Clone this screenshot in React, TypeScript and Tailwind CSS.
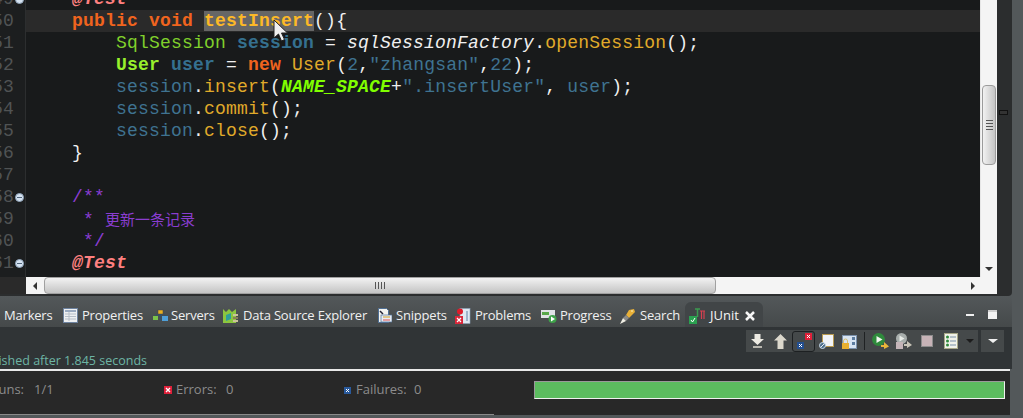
import React from 'react';

const MONO = 'font-["Liberation_Mono",monospace] text-[18px] leading-[22px] tracking-[0.2px] whitespace-pre';
const LABEL = "text-[13px] text-[#8c8c8c] font-['Open_Sans',sans-serif] whitespace-nowrap shrink-0";

const Kw = ({ children }: { children: React.ReactNode }) => <span className="font-bold text-[#f0641e]">{children}</span>;
const Var = ({ children }: { children: React.ReactNode }) => <span className="text-[#3f7391]">{children}</span>;
const VarB = ({ children }: { children: React.ReactNode }) => <span className="font-bold text-[#35708f]">{children}</span>;
const Fn = ({ children }: { children: React.ReactNode }) => <span className="text-[#e0aa2a]">{children}</span>;
const Cm = ({ children }: { children: React.ReactNode }) => <span className="text-[#8a3dd0]">{children}</span>;
const Ann = () => <span className="font-bold italic text-[#ff8080]">@Test</span>;

const Line = ({ active, children }: { active?: boolean; children?: React.ReactNode }) => (
  <div className={`h-[22px] ${MONO} text-[#f0f0f0] ${active ? 'bg-[#2a2a2a] ml-[2px] pl-[26px]' : 'pl-[28px]'}`}>{children}</div>
);

const FoldIcon = () => (
  <div className="w-[9px] h-[9px] rounded-full bg-[#d5e2f0] border border-[#8fa3b8] flex items-center justify-center">
    <div className="w-[5px] h-px bg-[#50647a]" />
  </div>
);

const Num = ({ n, fold }: { n: string; fold?: boolean }) => (
  <div className="h-[22px] flex items-center justify-end">
    <span className={`${MONO} text-[#505354] shrink-0`}>{n}</span>
    <div className="w-[11px] shrink-0 flex justify-end pr-px">{fold && <FoldIcon />}</div>
  </div>
);

const Tab = ({ className, icon, label }: { className: string; icon: React.ReactNode; label: string }) => (
  <div className={`flex items-center shrink-0 h-[25px] pt-[2px] ${className}`}>
    {icon}
    <span className="text-[13px] text-[#f0f0f0] whitespace-nowrap font-['Open_Sans',sans-serif] tracking-[-0.2px]">{label}</span>
  </div>
);

const PropsIcon = () => (
  <svg width="15" height="15" viewBox="0 0 15 15" className="mr-[4px]">
    <rect x="0.5" y="0.5" width="14" height="14" fill="#eef0f2" stroke="#6e83a0" />
    <rect x="2" y="2" width="11" height="2" fill="#9aaac0" />
    <path d="M2 6h11M2 8.500h11M2 11h11M6 4v9" stroke="#b6bec8" />
  </svg>
);
const ServersIcon = () => (
  <svg width="15" height="14" viewBox="0 0 15 14" className="mr-[3px]">
    <rect x="5" y="1" width="5" height="4" fill="#e8b020" stroke="#444" strokeWidth="0.5" />
    <rect x="0" y="7" width="5" height="4" fill="#7cc24a" />
    <rect x="9" y="7" width="6" height="5" fill="#4f9fd8" />
    <path d="M3 7V6h9v1M7.500 5v7" stroke="#30506a" fill="none" />
  </svg>
);
const DataIcon = () => (
  <svg width="16" height="16" viewBox="0 0 16 16" className="mr-[4px]">
    <path d="M0 1l3 3 3-3 3 3 4-3v14H0z" fill="#8cc63f" />
    <path d="M3 7l5-2v6l-5 2z" fill="#2fa09a" />
    <rect x="10" y="6" width="5" height="2" fill="#c9c29a" />
    <rect x="10" y="9" width="5" height="2" fill="#8a7f58" />
    <rect x="10" y="12" width="5" height="2" fill="#c9c29a" />
  </svg>
);
const SnippetsIcon = () => (
  <svg width="14" height="15" viewBox="0 0 14 15" className="mr-[4px]">
    <path d="M0.500 0.500h8l2 2v12h-10z" fill="#f4f4f0" stroke="#4f6f95" />
    <path d="M2 3l3 3" stroke="#223" strokeWidth="1.500" />
    <rect x="3" y="7" width="11" height="7" fill="#e6ecf4" stroke="#4f6f95" strokeWidth="0.7" />
    <path d="M5 9h7" stroke="#d8a020" /><path d="M5 12h7" stroke="#e05050" />
  </svg>
);
const ProblemsIcon = () => (
  <svg width="16" height="16" viewBox="0 0 16 16" className="mr-[4px]">
    <rect x="5" y="0.500" width="10" height="15" fill="#dfe8f2" stroke="#8aa0b8" strokeWidth="0.6" />
    <rect x="11" y="3" width="2" height="10" fill="#9fb4cc" />
    <circle cx="5" cy="3.500" r="3" fill="#e01b2a" />
    <rect x="0" y="8" width="8" height="8" fill="#d9273a" />
    <path d="M2 10l4 4M6 10l-4 4" stroke="#fff" strokeWidth="1.200" />
  </svg>
);
const ProgressIcon = () => (
  <svg width="16" height="14" viewBox="0 0 16 14" className="mr-[3px]">
    <rect x="0" y="1" width="14" height="8" fill="#dfe3e6" />
    <rect x="1" y="3" width="7" height="3" fill="#58a84a" />
    <circle cx="11.500" cy="10" r="4" fill="#3ea24a" />
    <path d="M10 7.500l4 2.500-4 2.500z" fill="#fff" />
  </svg>
);
const SearchIcon = () => (
  <svg width="16" height="16" viewBox="0 0 16 16" className="mr-[4px]">
    <path d="M9 2l5-1 1 3-6 6-3-3z" fill="#e8b038" />
    <path d="M6 7l3 3-3 3-3-3z" fill="#8a8a88" />
    <path d="M3 10l3 3-6 3z" fill="#f0eee4" />
    <path d="M11 3l2 0" stroke="#fff3c0" />
  </svg>
);
const JUnitIcon = () => (
  <svg width="16" height="16" viewBox="0 0 16 16" className="mr-[5px]">
    <path d="M6 1h5M8.500 1v8" stroke="#3c9a50" strokeWidth="1.500" />
    <path d="M11 3h5M12.500 3v8M15 3v8" stroke="#d84050" strokeWidth="1.200" />
    <rect x="0" y="8" width="8" height="8" fill="#2aa050" />
    <path d="M2 12l1.500 2L6 10" stroke="#fff" fill="none" />
  </svg>
);

const ErrIcon = () => (
  <svg width="8" height="8" viewBox="0 0 8 8" className="mr-[4px] shrink-0">
    <rect width="8" height="8" fill="#e0203a" />
    <path d="M2 2l4 4M6 2L2 6" stroke="#fff" strokeWidth="1.300" />
  </svg>
);
const FailIcon = () => (
  <svg width="7" height="7" viewBox="0 0 7 7" className="mr-[5px] shrink-0">
    <rect width="7" height="7" fill="#2a5a9c" />
    <path d="M2 2l3 3M5 2L2 5" stroke="#fff" />
  </svg>
);

const Toolbar = () => (
  <div className="flex items-center h-[22px] bg-[#45494a] w-[232px] pl-[5px] shrink-0">
    <svg width="13" height="15" viewBox="0 0 13 15" className="mr-[10px]">
      <path d="M3.500 0h6v5H13L6.500 11 0 5h3.500z" fill="#eceae2" /><rect x="2" y="12" width="9" height="2" fill="#b8b6ae" />
    </svg>
    <svg width="13" height="15" viewBox="0 0 13 15" className="mr-[5px]">
      <path d="M6.500 0L13 6.500H9.500V15h-6V6.500H0z" fill="#dcd8cc" />
    </svg>
    <div className="relative w-[23px] h-[21px] rounded-[3px] border border-[#1d2022] shrink-0">
      <svg width="21" height="19" viewBox="0 0 21 19" className="absolute left-0 top-0">
        <rect x="12" y="1" width="7" height="7" fill="#e0203a" /><path d="M14 3l3 3M17 3l-3 3" stroke="#fff" />
        <rect x="4" y="10" width="7" height="7" fill="#234f90" /><path d="M6 12l3 3M9 12l-3 3" stroke="#fff" />
      </svg>
    </div>
    <svg width="15" height="15" viewBox="0 0 15 15" className="ml-[4px] mr-[8px]">
      <rect x="3.500" y="0.500" width="11" height="12" fill="#f2f4f8" stroke="#b89a50" />
      <circle cx="3.500" cy="11.500" r="3" fill="#50708c" stroke="#c8d8e8" /><path d="M1.500 13.500l4-4" stroke="#e8eef4" />
    </svg>
    <svg width="15" height="15" viewBox="0 0 15 15" className="mr-[7px]">
      <rect x="0.500" y="1.500" width="14" height="13" fill="#d8e4f2" stroke="#7c92ac" />
      <rect x="10" y="3" width="3" height="3" fill="#5d7da0" /><rect x="10" y="8" width="3" height="3" fill="#5d7da0" />
      <rect x="0" y="9" width="7" height="6" fill="#e8b030" /><path d="M1.500 9V7a2 2 0 0 1 4 0v2" stroke="#d8c070" fill="none" />
    </svg>
    <div className="w-px h-[18px] bg-[#1f2223] mr-[7px]" />
    <svg width="17" height="16" viewBox="0 0 17 16" className="mr-[6px]">
      <circle cx="6.500" cy="6.500" r="6.500" fill="#2f8a3c" /><path d="M4.500 3l6 3.500-6 3.500z" fill="#f2f6f0" />
      <path d="M9 12h3V9l5 4.500L12 16v-2H9z" fill="#eab53a" />
    </svg>
    <svg width="17" height="16" viewBox="0 0 17 16" className="mr-[9px]">
      <circle cx="6.500" cy="5.500" r="5.500" fill="#a8aeac" /><path d="M4.500 2.500l5 3-5 3z" fill="#e8ece8" />
      <rect x="1" y="9" width="7" height="7" fill="#c4b4b8" />
      <path d="M9 11h3V8l5 4-5 3v-2H9z" fill="#c8c4b8" />
    </svg>
    <div className="w-[12px] h-[12px] bg-[#c7b3b7] border border-[#8c8c8c] mr-[11px] shrink-0" />
    <svg width="14" height="16" viewBox="0 0 14 16" className="mr-[8px]">
      <rect x="0.500" y="0.500" width="13" height="15" fill="#f0f2ea" stroke="#a8a888" />
      <circle cx="3.500" cy="4" r="1.500" fill="#2f8a3c" /><circle cx="3.500" cy="8" r="1.500" fill="#2f8a3c" /><circle cx="3.500" cy="12" r="1.500" fill="#2f8a3c" />
      <path d="M6 4h6M6 8h6M6 12h6" stroke="#7890a8" />
    </svg>
    <div className="w-0 h-0 border-x-[4px] border-x-transparent border-t-[4px] border-t-[#1c1c1c]" />
  </div>
);

export default function App() {
  return (
    <div className="w-[1023px] h-[418px] overflow-hidden flex flex-col bg-[#53585a]">
      {/* editor + right strip */}
      <div className="flex w-[1012px] h-[296px] shrink-0 bg-[#2b2d2e] rounded-br-[4px]">
        <div className="w-[997px] h-[294px] flex flex-col shrink-0">
          <div className="flex h-[277px] shrink-0">
            {/* gutter */}
            <div className="w-[26px] shrink-0 bg-[#1c1e1f] border-r border-[#2c2e2f] overflow-hidden">
              <div className="-mt-[12px]">
                <Num n="49" fold />
                <Num n="50" />
                <Num n="51" />
                <Num n="52" />
                <Num n="53" />
                <Num n="54" />
                <Num n="55" />
                <Num n="56" />
                <Num n="57" />
                <Num n="58" fold />
                <Num n="59" />
                <Num n="60" />
                <Num n="61" fold />
              </div>
            </div>
            {/* code */}
            <div className="flex-1 min-w-0 bg-[#181a1b] overflow-hidden relative">
              <div className="-mt-[12px] -ml-[26px]">
                <Line>{'    '}<Ann /></Line>
                <Line active>{'    '}<Kw>public</Kw> <Kw>void</Kw> <span className="font-bold text-[#fdb927] bg-[#666666]">testInsert</span>(){'{'}</Line>
                <Line>{'        '}<span className="text-[#80d02c]">SqlSession</span> <VarB>session</VarB> = <i>sqlSessionFactory</i>.<Fn>openSession</Fn>();</Line>
                <Line>{'        '}<span className="font-bold text-[#98f02c]">User</span> <VarB>user</VarB> = <Kw>new</Kw> <Fn>User</Fn>(<Var>2</Var>,<Var>"zhangsan"</Var>,<Var>22</Var>);</Line>
                <Line>{'        '}<Var>session</Var>.<Fn>insert</Fn>(<span className="font-bold italic text-[#80ff00]">NAME_SPACE</span>+<Var>".insertUser"</Var>, <Var>user</Var>);</Line>
                <Line>{'        '}<Var>session</Var>.<Fn>commit</Fn>();</Line>
                <Line>{'        '}<Var>session</Var>.<Fn>close</Fn>();</Line>
                <Line>{'    }'}</Line>
                <Line />
                <Line>{'    '}<Cm>/**</Cm></Line>
                <Line>{'     '}<Cm>*{' '}<span className="font-['Noto_Sans_CJK_SC',sans-serif] text-[15px] tracking-normal">更新一条记录</span></Cm></Line>
                <Line>{'     '}<Cm>*/</Cm></Line>
                <Line>{'    '}<Ann /></Line>
              </div>
              {/* mouse cursor */}
              <svg width="18" height="25" viewBox="0 0 18 25" className="absolute left-[247px] top-[19px]">
                <path d="M1 1v18l4.500-4 3 7 3-1.500-3-6.500h6z" fill="#f0f0f0" stroke="#222" />
              </svg>
            </div>
            {/* vertical scrollbar */}
            <div className="w-[17px] shrink-0 bg-[#f4f4f4] border-l border-[#e6e6e6] flex flex-col">
              <div className="h-[85px]" />
              <div className="h-[80px] mx-px rounded-sm border border-[#9c9c9c] bg-gradient-to-r from-[#f2f2f2] to-[#c4c4c4] flex flex-col items-center justify-center gap-[2px]">
                <div className="w-[7px] h-px bg-[#555]" />
                <div className="w-[7px] h-px bg-[#555]" />
                <div className="w-[7px] h-px bg-[#555]" />
                <div className="w-[7px] h-px bg-[#555]" />
              </div>
              <div className="flex-1 flex items-end justify-center pb-[6px]">
                <div className="w-0 h-0 border-x-[4px] border-x-transparent border-t-[4px] border-t-[#333]" />
              </div>
            </div>
          </div>
          {/* horizontal scrollbar */}
          <div className="flex h-[17px] shrink-0 bg-[#f4f4f4]">
            <div className="w-[26px] bg-[#2a2a2a] shrink-0" />
            <div className="w-[18px] flex items-center justify-center shrink-0">
              <div className="w-0 h-0 border-y-[4px] border-y-transparent border-r-[4px] border-r-[#333]" />
            </div>
            <div className="w-[672px] shrink-0 rounded-sm border border-[#a0a0a0] bg-gradient-to-b from-[#f2f2f2] to-[#c4c4c4] flex items-center justify-center gap-[2px]">
              <div className="w-px h-[7px] bg-[#555]" />
              <div className="w-px h-[7px] bg-[#555]" />
              <div className="w-px h-[7px] bg-[#555]" />
              <div className="w-px h-[7px] bg-[#555]" />
            </div>
            <div className="flex-1 flex items-center justify-end pr-[22px]">
              <div className="w-0 h-0 border-y-[4px] border-y-transparent border-l-[4px] border-l-[#333]" />
            </div>
          </div>
        </div>
        <div className="w-[15px] shrink-0 pt-[110px] pl-[2px]">
          <div className="w-[9px] h-[5px] border border-[#111] bg-[#333]" />
        </div>
      </div>

      {/* bottom view */}
      <div className="flex-1 w-[1012px] flex flex-col min-h-0">
        {/* tabs */}
        <div className="h-[31px] shrink-0 flex items-end bg-gradient-to-b from-[#53585a] to-[#45494a] pl-[4px]">
          <span className="text-[13px] text-[#f0f0f0] whitespace-nowrap font-['Open_Sans',sans-serif] tracking-[-0.2px] w-[59px] shrink-0 h-[25px] pt-[2px] flex items-center">Markers</span>
          <Tab className="w-[90px]" icon={<PropsIcon />} label="Properties" />
          <Tab className="w-[70px]" icon={<ServersIcon />} label="Servers" />
          <Tab className="w-[155px]" icon={<DataIcon />} label="Data Source Explorer" />
          <Tab className="w-[77px]" icon={<SnippetsIcon />} label="Snippets" />
          <Tab className="w-[86px]" icon={<ProblemsIcon />} label="Problems" />
          <Tab className="w-[79px]" icon={<ProgressIcon />} label="Progress" />
          <Tab className="w-[65px]" icon={<SearchIcon />} label="Search" />
          <div className="w-[78px] h-[25px] pt-[2px] shrink-0 flex items-center rounded-t-[6px] bg-[#414547] pl-[4px]">
            <JUnitIcon />
            <span className="text-[13px] text-[#f4f4f4] font-['Open_Sans',sans-serif] whitespace-nowrap w-[35px]">JUnit</span>
            <svg width="10" height="10" viewBox="0 0 10 10">
              <path d="M1 1l8 8M9 1l-8 8" stroke="#f6f6f6" strokeWidth="2.500" />
            </svg>
          </div>
          <div className="flex-1 flex items-center justify-end h-[25px] pr-[15px] gap-[14px]">
            <div className="w-[8px] h-[2px] bg-[#f0f0f0]" />
            <div className="w-[9px] h-[9px] bg-[#f4f4f4] border-t-2 border-[#d0d0d0]" />
          </div>
        </div>
        {/* status + toolbar */}
        <div className="h-[42px] shrink-0 bg-[#303436] flex justify-end relative">
          <div className="absolute left-0 bottom-0 w-[147px] flex justify-end overflow-hidden">
            <span className="text-[12.500px] leading-[16px] text-[#6db5a5] whitespace-nowrap font-['Open_Sans',sans-serif]">Finished after 1.845 seconds</span>
          </div>
          <div className="flex gap-[3px] pt-[3px] pr-[8px]">
            <Toolbar />
            <div className="w-[23px] h-[22px] bg-[#45494a] flex items-center justify-center">
              <div className="w-0 h-0 border-x-[5px] border-x-transparent border-t-[4px] border-t-[#f0f0f0]" />
            </div>
          </div>
        </div>
        {/* counters */}
        <div className="h-[46px] shrink-0 bg-[#282828] border-t-2 border-[#e8e8e8] w-[1010px] flex items-center pb-[6px]">
          <div className="w-[24px] flex justify-end overflow-hidden shrink-0">
            <span className={LABEL}>Runs:</span>
          </div>
          <span className={`${LABEL} w-[140px] pl-[10px]`}>1/1</span>
          <ErrIcon />
          <span className={`${LABEL} w-[50px]`}>Errors:</span>
          <span className={`${LABEL} w-[118px]`}>0</span>
          <FailIcon />
          <span className={`${LABEL} w-[58px]`}>Failures:</span>
          <span className={`${LABEL} w-[120px]`}>0</span>
          <div className="w-[471px] h-[18px] shrink-0 bg-[#5cbc5f] border border-[#f0f0f0] border-t-[#9a9a9a] border-l-[#9a9a9a]" />
        </div>
        <div className="h-px w-[494px] bg-[#8a8a8a] shrink-0 -mt-px" />
      </div>
    </div>
  );
}
